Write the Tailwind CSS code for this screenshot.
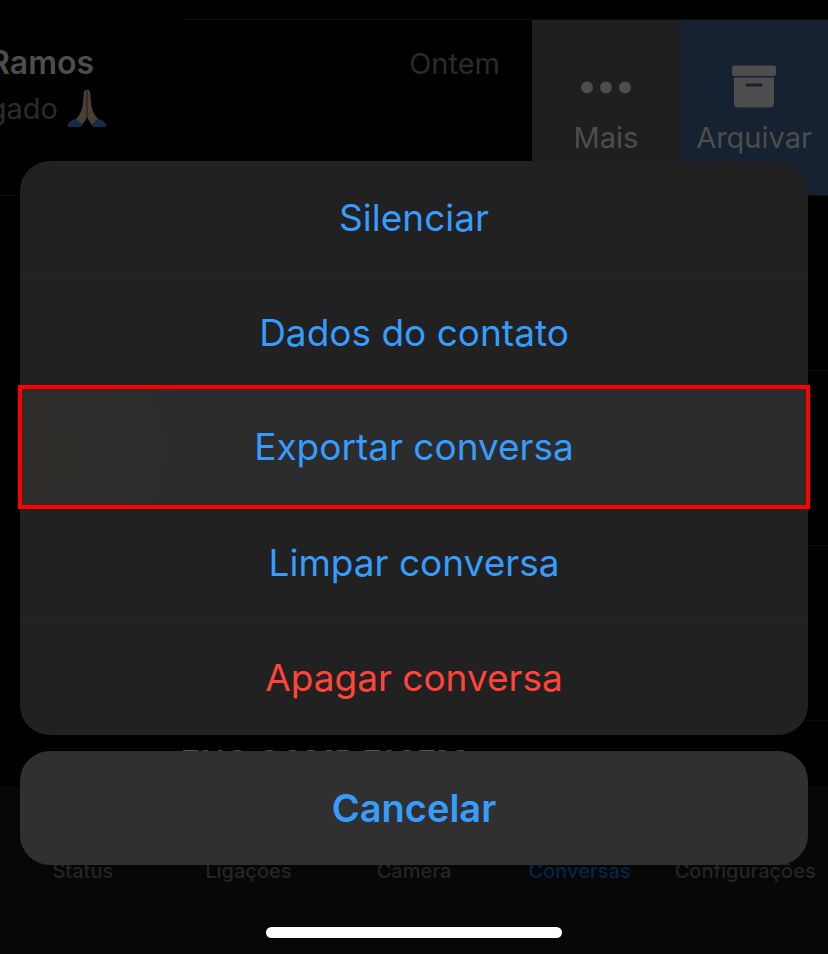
<!DOCTYPE html>
<html lang="pt-BR">
<head>
<meta charset="utf-8">
<meta name="viewport" content="width=device-width, initial-scale=1">
<title>Conversas</title>
<script src="https://cdn.jsdelivr.net/npm/@tailwindcss/browser@4"></script>
</head>
<body class="bg-black font-['Inter','Liberation_Sans',sans-serif]">
<div class="relative flex min-h-screen flex-col overflow-hidden">
  <!-- Dimmed chat list -->
  <main class="flex flex-1 flex-col">
    <div class="ml-[181px] h-5 border-b border-[#0c0c0c]"></div>
    <section class="flex h-[176px] border-b border-[#0c0c0c]">
      <div class="flex min-w-0 flex-1 justify-between pt-6 pr-8">
        <div class="w-[110px]">
          <h2 class="flex justify-end pr-4 text-[32px] leading-[38px] font-semibold text-[#4d4d4d]">Ramos</h2>
          <p class="mt-[7px] flex items-center justify-end gap-[10px] pr-1 text-[29px] leading-10 text-[#2b2b2d]">
            <span>gado</span>
            <svg class="h-10 w-[38px] shrink-0" viewBox="0 0 38 40" role="img" aria-label="Mãos em oração">
              <path d="M0 38V35Q5 29 11 30L16 34L13 38ZM38 38V35Q33 29 27 30L22 34L25 38Z" fill="#152b47"/>
              <path d="M17.500 1Q15.500 1 15.500 8L14.500 17Q13 25 8 30L14 35Q18 32 19 27Q20 32 24 35L30 30Q25 25 23.500 17L22.500 8Q22.500 1 20.500 1Z" fill="#4a3e36"/>
              <path d="M19 2V28" stroke="#211a16" stroke-width="1"/>
            </svg>
          </p>
        </div>
        <time class="text-[29px] leading-10 text-[#2b2b2d]">Ontem</time>
      </div>
      <button class="flex w-[148px] shrink-0 flex-col items-center bg-[#1f1f1f] pt-11 text-[29px] leading-10 text-[#4d4d4d]">
        <svg class="h-[46px] w-[52px]" viewBox="0 0 52 46" fill="#4d4d4d" aria-hidden="true"><circle cx="7" cy="23.500" r="6"/><circle cx="26" cy="23.500" r="6"/><circle cx="45" cy="23.500" r="6"/></svg>
        <span class="mt-2">Mais</span>
      </button>
      <button class="flex w-[148px] shrink-0 flex-col items-center bg-[#162131] pt-11 text-[29px] leading-10 text-[#4d4d4d]">
        <svg class="h-[46px] w-[46px]" viewBox="0 0 46 46" aria-hidden="true"><rect x="1" y="1.500" width="44" height="10.500" rx="2.500" fill="#4d4d4d"/><path d="M3 13.500H43V39Q43 43.500 38.500 43.500H7.500Q3 43.500 3 39Z" fill="#4d4d4d"/><path d="M16 21H30" stroke="#162131" stroke-width="3" stroke-linecap="round"/></svg>
        <span class="mt-2">Arquivar</span>
      </button>
    </section>
    <div class="ml-[181px] h-[175px] border-b border-[#0c0c0c]"></div>
    <div class="ml-[181px] h-[175px] border-b border-[#0c0c0c]"></div>
    <div class="ml-[181px] h-[175px] border-b border-[#0c0c0c]"></div>
    <h2 class="ml-[181px] h-[65px] pt-[22px] text-[32px] leading-10 font-semibold text-[#4d4d4d]">ENG COMP 7°SEM</h2>
  </main>
  <nav class="flex h-[168px] shrink-0 bg-[#070707] pt-[73px] text-[20px] leading-6 font-medium text-[#252525]">
    <a href="#" class="w-1/5 text-center">Status</a>
    <a href="#" class="w-1/5 text-center">Ligações</a>
    <a href="#" class="w-1/5 text-center">Câmera</a>
    <a href="#" class="w-1/5 text-center text-[#032648]">Conversas</a>
    <a href="#" class="w-1/5 text-center">Configurações</a>
  </nav>

  <!-- Action sheet -->
  <div role="dialog" aria-label="Opções da conversa" class="absolute inset-x-5 bottom-4 flex flex-col text-[37px] leading-[48px] text-[#369cfd]">
    <div class="flex flex-col rounded-[30px] bg-[#212121]">
      <button class="h-[115px] border-b border-[#262626]">Silenciar</button>
      <button class="h-[109px] pt-1">Dados do contato</button>
      <button class="-mx-0.5 h-[124px] border-4 border-[#ff0000] bg-[#2c2c2b] bg-radial-[circle_at_40px_60px] from-[#2f2e2b] to-[#2c2c2c] to-[130px]">Exportar conversa</button>
      <button class="h-[112px] border-b border-[#262626] pb-1">Limpar conversa</button>
      <button class="h-[114px] text-[#ff453a]">Apagar conversa</button>
    </div>
    <button class="mt-4 h-[114px] rounded-[30px] bg-[#303030] text-[38px] font-semibold">Cancelar</button>
    <div class="mx-auto mt-[62px] h-[11px] w-[296px] rounded-full bg-white"></div>
  </div>
</div>
</body>
</html>
